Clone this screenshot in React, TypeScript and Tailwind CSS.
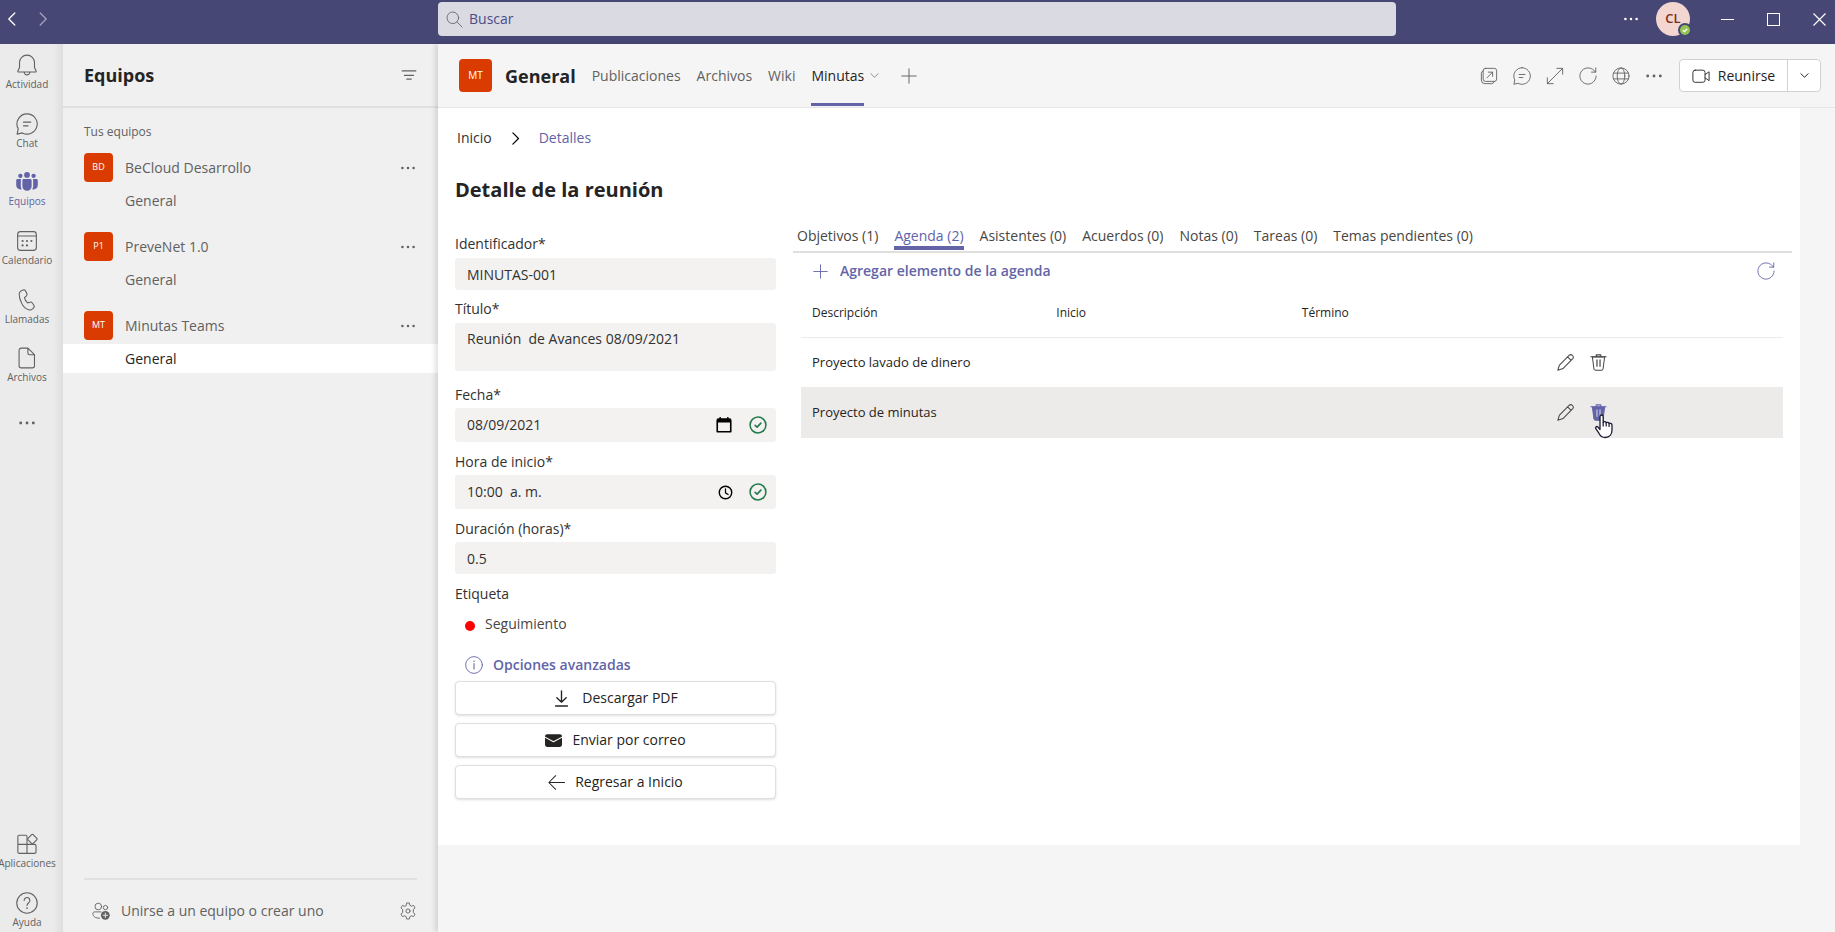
import { useState, type ReactNode } from 'react';

type IconProps = { size?: number; className?: string };

function Svg({ size = 20, className, children }: IconProps & { children: ReactNode }) {
  return (
    <svg
      width={size}
      height={size}
      viewBox="0 0 20 20"
      fill="none"
      stroke="currentColor"
      strokeWidth="1"
      strokeLinecap="round"
      strokeLinejoin="round"
      className={`shrink-0 ${className ?? ''}`}
      aria-hidden="true"
    >
      {children}
    </svg>
  );
}

const BellIcon = (p: IconProps) => (
  <Svg {...p}>
    <path d="M10 1a6.8 6.8 0 0 0-6.8 6.8v4.4l-1.5 3.2c-.2.5.1 1 .6 1h15.4c.5 0 .8-.5.6-1l-1.5-3.2V7.8A6.8 6.8 0 0 0 10 1zM7.4 16.6c.2 1.4 1.3 2.4 2.6 2.4s2.4-1 2.6-2.4" />
  </Svg>
);

const ChatIcon = (p: IconProps) => (
  <Svg {...p}>
    <path d="M10 .8a9.2 9.2 0 1 1-4.3 17.3L1 19.2l1-4.8A9.2 9.2 0 0 1 10 .8zM6.8 8.3h6.6M6.8 11.7h4.2" />
  </Svg>
);

const TeamsIcon = (p: IconProps) => (
  <Svg {...p}>
    <g fill="currentColor" stroke="none">
      <circle cx="10" cy="3.6" r="2.6" />
      <circle cx="4" cy="4.4" r="2" />
      <circle cx="16" cy="4.4" r="2" />
      <path d="M5.8 8.6c0-.8.6-1.3 1.3-1.3h5.8c.7 0 1.3.5 1.3 1.3v5.2a4.2 4.2 0 0 1-8.4 0z" />
      <path d="M.2 8.6c0-.8.5-1.3 1.2-1.3h3.3c-.2.3-.3.7-.3 1.2v5.3c0 1 .3 2 .8 2.8C2.7 17.3.2 15.7.2 13z" />
      <path d="M19.8 8.6c0-.8-.5-1.3-1.2-1.3h-3.3c.2.3.3.7.3 1.2v5.3c0 1-.3 2-.8 2.8 2.500.7 5-.9 5-3.600z" />
    </g>
  </Svg>
);

const CalendarIcon = (p: IconProps) => (
  <Svg {...p}>
    <rect x="1.5" y="1.5" width="17" height="17" rx="2.6" />
    <path d="M1.5 5.5h17" />
    <g fill="currentColor" stroke="none">
      <circle cx="6" cy="10" r="1" />
      <circle cx="10" cy="10" r="1" />
      <circle cx="14" cy="10" r="1" />
      <circle cx="6" cy="14" r="1" />
      <circle cx="10" cy="14" r="1" />
    </g>
  </Svg>
);

const PhoneIcon = (p: IconProps) => (
  <Svg {...p}>
    <path d="M5.3 1.3l1.2-.4c1-.3 2 .2 2.4 1.1l.9 2.1c.3.8.1 1.7-.5 2.3L7.700 7.900c.3 1.600 1.500 3.700 2.900 4.700l2-.6c.8-.3 1.700 0 2.200.7l1.300 1.900c.6.800.5 1.900-.2 2.600l-.9.9c-.9.9-2.200 1.200-3.400.8-2.900-.9-5.400-3.500-6.600-6.300C3.500 9.600 2.700 6.600 3 4.100c.2-1.300 1.100-2.400 2.300-2.800z" />
  </Svg>
);

const FileIcon = (p: IconProps) => (
  <Svg {...p}>
    <path d="M4.8 1h6l6 6v10a2 2 0 0 1-2 2h-10a2 2 0 0 1-2-2V3a2 2 0 0 1 2-2zM10.8 1v4.500A1.500 1.500 0 0 0 12.300 7h4.500" />
  </Svg>
);

const AppsIcon = (p: IconProps) => (
  <Svg {...p}>
    <path d="M10 10.300V3.200a1.200 1.200 0 0 0-1.200-1.200H2.900a1.200 1.200 0 0 0-1.200 1.200v14.100a1.200 1.200 0 0 0 1.200 1.200h14.100a1.200 1.200 0 0 0 1.200-1.200v-5.800a1.200 1.200 0 0 0-1.200-1.200zM1.700 10.300H10v8.200" />
    <rect x="11.6" y="2.2" width="6.6" height="6.6" rx="1" transform="rotate(45 14.9 5.5)" />
  </Svg>
);

const HelpIcon = (p: IconProps) => (
  <Svg {...p}>
    <circle cx="10" cy="10" r="9.3" />
    <path d="M7.4 7.7a2.6 2.6 0 1 1 4.2 2c-.9.7-1.6 1.2-1.6 2.5" />
    <circle cx="10" cy="14.6" r=".8" fill="currentColor" stroke="none" />
  </Svg>
);

const DotsIcon = (p: IconProps) => (
  <Svg {...p}>
    <g fill="currentColor" stroke="none">
      <circle cx="3" cy="10" r="1.6" />
      <circle cx="10" cy="10" r="1.6" />
      <circle cx="17" cy="10" r="1.6" />
    </g>
  </Svg>
);

const FilterIcon = (p: IconProps) => (
  <Svg {...p}>
    <path d="M2.5 5.500h15M5 10.500h10M7.500 14.500h5" strokeWidth="1.4" />
  </Svg>
);

const JoinTeamIcon = (p: IconProps) => (
  <Svg {...p}>
    <circle cx="7" cy="5" r="3.7" />
    <circle cx="15" cy="6.2" r="2.4" />
    <path d="M10 11H2.800C1.700 11 1 11.800 1 12.800c0 3.200 2.500 5.200 7.500 5.200" />
    <circle cx="14.8" cy="14.8" r="4.9" fill="currentColor" stroke="none" />
    <path d="M14.8 12.300v5M12.300 14.800h5" stroke="#f0f0f0" />
  </Svg>
);

const GearIcon = (p: IconProps) => (
  <Svg {...p}>
    <circle cx="10" cy="10" r="2.3" />
    <path d="M8 3.600L8.400 1.200a9 9 0 0 1 3.200 0l.4 2.400 1.900 1.100 2.300-.9a9 9 0 0 1 1.600 2.800L15.900 8.300v3.400l1.900 1.700a9 9 0 0 1-1.600 2.800l-2.300-.9L12 16.400l-.4 2.400a9 9 0 0 1-3.200 0L8 16.400l-1.900-1.100-2.300.9a9 9 0 0 1-1.600-2.800l1.900-1.700V8.300L2.200 6.600a9 9 0 0 1 1.600-2.800l2.300.9z" />
  </Svg>
);

const SearchIcon = (p: IconProps) => (
  <Svg {...p}>
    <circle cx="8" cy="8" r="6.8" />
    <path d="M13 13l6 6" />
  </Svg>
);

const ChevronLeft = (p: IconProps) => (
  <Svg {...p}><path d="M13.5 2.500L6 10l7.500 7.500" strokeWidth="1.600" /></Svg>
);
const ChevronRight = (p: IconProps) => (
  <Svg {...p}><path d="M6.5 2.500L14 10l-7.500 7.500" strokeWidth="1.600" /></Svg>
);
const ChevronDown = (p: IconProps) => (
  <Svg {...p}><path d="M2 6l8 8 8-8" strokeWidth="2.2" /></Svg>
);
const PlusIcon = (p: IconProps) => (
  <Svg {...p}><path d="M10 1v18M1 10h18" strokeWidth="1.2" /></Svg>
);

const PopOutIcon = (p: IconProps) => (
  <Svg {...p}>
    <rect x="3.5" y="1.5" width="15" height="14.5" rx="2.6" />
    <path d="M3.500 4.300A3 3 0 0 0 1.500 7v7.500a4 4 0 0 0 4 4H13a3 3 0 0 0 2.800-2.200M7.800 12l6.200-6.300M9.300 5.700H14v4.700" />
  </Svg>
);

const ExpandIcon = (p: IconProps) => (
  <Svg {...p}>
    <path d="M1.500 18.500l17-17M12 1.500h6.500V8M1.500 12v6.500H8" />
  </Svg>
);

const RefreshIcon = (p: IconProps) => (
  <Svg {...p}>
    <path d="M19 10a9 9 0 1 1-2.600-6.300L18.600 5.700M18.600 1v4.700h-4.700" />
  </Svg>
);

const GlobeIcon = (p: IconProps) => (
  <Svg {...p}>
    <circle cx="10" cy="10" r="9" />
    <ellipse cx="10" cy="10" rx="4.2" ry="9" />
    <path d="M1.800 6.800h16.400M1.800 13.200h16.400" />
  </Svg>
);

const VideoIcon = (p: IconProps) => (
  <Svg {...p}>
    <rect x="1" y="3.5" width="13.5" height="13.5" rx="2.5" />
    <path d="M14.500 8.500L19 5.300v9.900l-4.500-3.200" />
  </Svg>
);

const DateIcon = (p: IconProps) => (
  <Svg {...p}>
    <path d="M4 3.500h12a1.500 1.500 0 0 1 1.500 1.500v12.500h-15V5A1.500 1.500 0 0 1 4 3.500z" strokeWidth="1.8" />
    <path d="M2.500 3.500h15v3.800h-15zM5 1h1.500v3H5zM13.500 1H15v3h-1.500z" fill="currentColor" stroke="none" />
  </Svg>
);

const ClockIcon = (p: IconProps) => (
  <Svg {...p}>
    <circle cx="10" cy="10" r="8.3" strokeWidth="1.9" />
    <path d="M10 5v5.500l3.500 2.200" strokeWidth="1.6" />
  </Svg>
);

const ValidIcon = (p: IconProps) => (
  <Svg {...p}>
    <circle cx="10" cy="10" r="8.8" strokeWidth="1.7" />
    <path d="M6.800 10.400l2.200 2 4.200-4.500" strokeWidth="1.8" />
  </Svg>
);

const InfoIcon = (p: IconProps) => (
  <Svg {...p}>
    <circle cx="10" cy="10" r="9.3" />
    <path d="M10 8.500v6" strokeWidth="1.2" />
    <circle cx="10" cy="5.9" r=".8" fill="currentColor" stroke="none" />
  </Svg>
);

const DownloadIcon = (p: IconProps) => (
  <Svg {...p}>
    <path d="M10 1v13M4.500 9l5.500 5.300L15.500 9M3 18.800h14" strokeWidth="1.6" />
  </Svg>
);

const MailIcon = (p: IconProps) => (
  <Svg {...p}>
    <rect x="0" y="2.5" width="20" height="15" rx="2.5" fill="currentColor" stroke="none" />
    <path d="M0 6l10 5.500L20 6" stroke="#ffffff" strokeWidth="1.2" />
  </Svg>
);

const ArrowLeftIcon = (p: IconProps) => (
  <Svg {...p}>
    <path d="M19.500 10H1M9 2L1 10l8 8" strokeWidth="1.2" />
  </Svg>
);

const PencilIcon = (p: IconProps) => (
  <Svg {...p}>
    <path d="M14.200 1.700a2.900 2.900 0 0 1 4.100 4.100L7.300 16.800c-.3.300-.7.500-1.100.6L1 19l1.600-5.200c.1-.4.300-.8.6-1.100zM12.500 3.400l4.100 4.100" strokeWidth="1.2" />
  </Svg>
);

const TrashIcon = ({ filled, ...p }: IconProps & { filled?: boolean }) => (
  <Svg {...p}>
    <path d="M1 3.200h18M7.300 3V1h5.400v2" strokeWidth="1.3" />
    <path
      d="M2.800 3.500L4.600 17.400c.1 1 .8 1.600 1.700 1.600h7.400c.9 0 1.600-.6 1.700-1.600L17.200 3.500z"
      fill={filled ? 'currentColor' : 'none'}
      strokeWidth="1.2"
    />
    <path d="M8.200 7v7.500M11.800 7v7.500" stroke={filled ? '#c9c8e0' : 'currentColor'} strokeWidth="1.4" />
  </Svg>
);

const HandCursor = () => (
  <svg width="20" height="25" viewBox="0 0 20 25" className="pointer-events-none absolute left-1 top-[10px] z-10" aria-hidden="true">
    <path
      d="M6 15.500V2.800C6 1.700 6.700 1 7.600 1s1.600.7 1.600 1.800v5.500c.2-.9 2.800-.9 3 .5.600-.8 2.800-.5 2.900.8.700-.6 2.900-.3 2.900 1.500v5c0 4.300-2.500 7.400-6.800 7.400-3.200 0-4.900-1.500-6.300-4.300l-3.100-4.500c-.8-1.300.6-2.700 2-1.900z"
      fill="#ffffff"
      stroke="#1b1b33"
      strokeWidth="1.3"
      strokeLinejoin="round"
    />
    <path d="M9.200 8v4.500M12.200 8.800v3.700M15.100 9.600v3.400" stroke="#1b1b33" strokeWidth="1.2" />
  </svg>
);

const RAIL_ITEMS = [
  { label: 'Actividad',  icon: BellIcon },
  { label: 'Chat',       icon: ChatIcon },
  { label: 'Equipos',    icon: TeamsIcon },
  { label: 'Calendario', icon: CalendarIcon },
  { label: 'Llamadas',   icon: PhoneIcon },
  { label: 'Archivos',   icon: FileIcon },
];

const RAIL_FOOTER = [
  { label: 'Aplicaciones', icon: AppsIcon },
  { label: 'Ayuda',        icon: HelpIcon },
];

const TEAMS = [
  { initials: 'BD', name: 'BeCloud Desarrollo' },
  { initials: 'P1', name: 'PreveNet 1.0' },
  { initials: 'MT', name: 'Minutas Teams' },
];

const DETAIL_TABS = [
  { label: 'Objetivos',        count: 1 },
  { label: 'Agenda',           count: 2 },
  { label: 'Asistentes',       count: 0 },
  { label: 'Acuerdos',         count: 0 },
  { label: 'Notas',            count: 0 },
  { label: 'Tareas',           count: 0 },
  { label: 'Temas pendientes', count: 0 },
];

const AGENDA = [
  { id: 1, description: 'Proyecto lavado de dinero', start: '', end: '' },
  { id: 2, description: 'Proyecto de minutas',       start: '', end: '' },
];

function RailButton({ label, icon: Icon, active }: { label: string; icon: (p: IconProps) => ReactNode; active?: boolean }) {
  return (
    <button
      type="button"
      className={`flex w-[54px] flex-col items-center justify-center text-[10px] leading-4 ${active ? 'text-[#6264a7]' : 'text-[#616161]'}`}
    >
      <Icon size={22} />
      {label}
    </button>
  );
}

function TitleBar() {
  return (
    <header className="flex h-11 shrink-0 items-start bg-[#464775] text-white">
      <div className="flex h-[38px] w-[438px] shrink-0 items-center gap-[15px] pl-1">
        <button type="button" aria-label="Atrás"><ChevronLeft size={16} /></button>
        <button type="button" aria-label="Adelante" className="text-[#a3a3ba]"><ChevronRight size={16} /></button>
      </div>
      <label className="mt-0.5 flex h-[34px] flex-1 items-center gap-1.5 rounded bg-[#dadae3] pl-2">
        <SearchIcon size={17} className="text-[#616161]" />
        <input
          type="search"
          aria-label="Buscar"
          placeholder="Buscar"
          className="w-full bg-transparent text-sm text-[#464775] outline-none placeholder:text-[#4b4c86]"
        />
      </label>
      <div className="flex h-[38px] w-[439px] shrink-0 items-center justify-end pr-2">
        <button type="button" aria-label="Más opciones" className="mr-[17px]"><DotsIcon size={16} /></button>
        <button type="button" aria-label="Cuenta" className="relative mr-[30px] flex size-[34px] items-center justify-center rounded-full bg-[#f3d6cf] text-[13px] font-semibold text-[#7a2e1d]">
          CL
          <svg width="14" height="14" viewBox="0 0 14 14" className="absolute -bottom-px -right-0.5" aria-hidden="true">
            <circle cx="7" cy="7" r="7" fill="#464775" />
            <circle cx="7" cy="7" r="5" fill="#92c353" />
            <path d="M4.800 7.100l1.600 1.500 2.800-2.900" fill="none" stroke="#ffffff" strokeWidth="1.3" />
          </svg>
        </button>
        <button type="button" aria-label="Minimizar" className="mr-[31px]">
          <svg width="15" height="15" viewBox="0 0 15 15" fill="none" stroke="currentColor"><path d="M1 7.500h13" /></svg>
        </button>
        <button type="button" aria-label="Maximizar" className="mr-[31px]">
          <svg width="15" height="15" viewBox="0 0 15 15" fill="none" stroke="currentColor"><rect x="1.5" y="1.5" width="12" height="12" /></svg>
        </button>
        <button type="button" aria-label="Cerrar">
          <svg width="15" height="15" viewBox="0 0 15 15" fill="none" stroke="currentColor" strokeWidth="1.2"><path d="M1.500 1.500l12 12M13.500 1.500l-12 12" /></svg>
        </button>
      </div>
    </header>
  );
}

function TeamsPanel() {
  return (
    <aside className="flex w-[375px] shrink-0 flex-col bg-[#f0f0f0] text-[#616161]">
      <div className="flex h-16 shrink-0 items-center justify-between border-b-2 border-[#e0e0e0] pl-[21px] pr-5">
        <h2 className="text-lg font-bold text-[#242424]">Equipos</h2>
        <button type="button" aria-label="Filtrar"><FilterIcon size={18} /></button>
      </div>
      <p className="pl-[21px] pt-4 text-xs leading-4">Tus equipos</p>
      <ul className="mt-[13px] flex flex-col gap-[17px]">
        {TEAMS.map((team) => {
          const selected = team.initials === 'MT';
          return (
            <li key={team.initials}>
              <div className="mb-1 flex h-[29px] items-center pl-[21px] pr-[22px] text-sm">
                <span className="mr-3 flex size-[29px] items-center justify-center rounded bg-[#da3b01] text-[9px] text-white">
                  {team.initials}
                </span>
                <span className="flex-1">{team.name}</span>
                <button type="button" aria-label={`Más opciones de ${team.name}`}><DotsIcon size={16} /></button>
              </div>
              <a
                href="#general"
                className={`flex h-[29px] items-center pl-[62px] text-sm ${selected ? 'bg-white text-[#242424]' : ''}`}
              >
                General
              </a>
            </li>
          );
        })}
      </ul>
      <div className="mx-[21px] mt-auto flex h-[54px] shrink-0 items-center justify-between border-t-2 border-[#e0e0e0] pl-2 pt-2.5">
        <button type="button" className="flex items-center gap-[11px] text-sm">
          <JoinTeamIcon size={18} />
          Unirse a un equipo o crear uno
        </button>
        <button type="button" aria-label="Configuración"><GearIcon size={18} /></button>
      </div>
    </aside>
  );
}

function ChannelHeader() {
  const tab = 'flex h-full items-center';
  return (
    <div className="flex h-16 shrink-0 items-center border-b border-[#e5e5e5] bg-[#f5f5f5] pl-[21px] pr-3.5 text-[#616161]">
      <span className="mr-[13px] flex size-[33px] items-center justify-center rounded bg-[#da3b01] text-[10px] text-white">MT</span>
      <h1 className="mr-4 text-lg font-bold leading-6 text-[#242424]">General</h1>
      <nav className="flex h-full items-center gap-4 text-sm">
        <a href="#publicaciones" className={tab}>Publicaciones</a>
        <a href="#archivos" className={tab}>Archivos</a>
        <a href="#wiki" className={tab}>Wiki</a>
        <a href="#minutas" aria-current="page" className={`${tab} relative gap-1.5 font-medium text-[#242424]`}>
          Minutas
          <ChevronDown size={9} className="text-[#8a8a8a]" />
          <span className="absolute bottom-px left-0 right-[15px] h-[3px] bg-[#6264a7]" />
        </a>
        <button type="button" aria-label="Agregar pestaña" className="ml-1.5"><PlusIcon size={16} /></button>
      </nav>
      <div className="ml-auto flex items-center gap-[15px]">
        <button type="button" aria-label="Abrir en ventana"><PopOutIcon size={18} /></button>
        <button type="button" aria-label="Conversación"><ChatIcon size={18} /></button>
        <button type="button" aria-label="Expandir"><ExpandIcon size={18} /></button>
        <button type="button" aria-label="Recargar"><RefreshIcon size={18} /></button>
        <button type="button" aria-label="Ir al sitio web"><GlobeIcon size={18} /></button>
        <button type="button" aria-label="Más"><DotsIcon size={18} /></button>
      </div>
      <div className="ml-4 flex h-[33px] rounded border border-[#d1d1d1] bg-white text-[#242424]">
        <button type="button" className="flex w-[108px] items-center justify-center gap-2 border-r border-[#d1d1d1] text-sm font-medium">
          <VideoIcon size={18} />
          Reunirse
        </button>
        <button type="button" aria-label="Opciones de reunión" className="flex w-8 items-center justify-center">
          <ChevronDown size={9} />
        </button>
      </div>
    </div>
  );
}

const FIELD = 'block w-full rounded-[3px] bg-[#f3f2f1] px-3 text-sm text-[#323130] outline-none';
const LABEL = 'block text-sm leading-5';

function MeetingForm() {
  return (
    <form className="w-[321px] shrink-0 text-[#323130]" onSubmit={(e) => e.preventDefault()}>
      <label htmlFor="ident" className={LABEL}>Identificador*</label>
      <input id="ident" type="text" defaultValue="MINUTAS-001" className={`${FIELD} mt-1 h-8`} />

      <label htmlFor="titulo" className={`${LABEL} mt-[9px]`}>Título*</label>
      <textarea id="titulo" defaultValue="Reunión  de Avances 08/09/2021" className={`${FIELD} mt-1 h-12 resize-none py-1.5 leading-5`} />

      <label htmlFor="fecha" className={`${LABEL} mt-[14px]`}>Fecha*</label>
      <div className="mt-[3px] flex h-[34px] items-center rounded-[3px] bg-[#f3f2f1] pr-[9px]">
        <input id="fecha" type="text" defaultValue="08/09/2021" className={FIELD} />
        <button type="button" aria-label="Elegir fecha" className="mr-4 text-black"><DateIcon size={18} /></button>
        <ValidIcon size={18} className="text-[#237b4b]" />
      </div>

      <label htmlFor="hora" className={`${LABEL} mt-[10px]`}>Hora de inicio*</label>
      <div className="mt-[3px] flex h-[34px] items-center rounded-[3px] bg-[#f3f2f1] pr-[9px]">
        <input id="hora" type="text" defaultValue="10:00  a. m." className={FIELD} />
        <button type="button" aria-label="Elegir hora" className="mr-4 text-black"><ClockIcon size={15} /></button>
        <ValidIcon size={18} className="text-[#237b4b]" />
      </div>

      <label htmlFor="duracion" className={`${LABEL} mt-[10px]`}>Duración (horas)*</label>
      <input id="duracion" type="text" defaultValue="0.5" className={`${FIELD} mt-[3px] h-8`} />

      <p className={`${LABEL} mt-[10px]`}>Etiqueta</p>
      <div className="mt-[10px] flex items-center gap-2.5 pl-2.5 text-sm leading-5">
        <span className="mt-1 size-2.5 rounded-full bg-[#ff0000]" />
        <span className="font-medium text-[#484644]">Seguimiento</span>
      </div>

      <button type="button" className="mt-[21px] flex items-center gap-2.5 pl-2.5 text-sm font-semibold leading-5 text-[#6264a7]">
        <InfoIcon size={18} />
        Opciones avanzadas
      </button>

      <div className="mt-1.5 flex flex-col gap-2">
        <FormButton><DownloadIcon size={17} className="mr-3" />Descargar PDF</FormButton>
        <FormButton><MailIcon size={17} className="mr-2.5" />Enviar por correo</FormButton>
        <FormButton><ArrowLeftIcon size={17} className="mr-2.5" />Regresar a Inicio</FormButton>
      </div>
    </form>
  );
}

function FormButton({ children }: { children: ReactNode }) {
  return (
    <button
      type="button"
      className="flex h-[34px] w-full items-center justify-center rounded-sm border border-[#e1dfdd] bg-white text-sm font-medium text-[#252423] shadow"
    >
      {children}
    </button>
  );
}

function AgendaPanel() {
  const [activeTab, setActiveTab] = useState('Agenda');

  return (
    <section className="min-w-0 flex-1 text-[#484644]">
      <div role="tablist" className="flex gap-4 border-b-2 border-[#e1dfdd] pl-1 text-sm leading-5">
        {DETAIL_TABS.map(({ label, count }) => (
          <button
            key={label}
            type="button"
            role="tab"
            aria-selected={activeTab === label}
            onClick={() => setActiveTab(label)}
            className={`mb-px border-b-4 ${activeTab === label ? 'border-[#6264a7] text-[#6264a7]' : 'border-transparent'}`}
          >
            {label} ({count})
          </button>
        ))}
      </div>

      <div className="flex h-9 items-center justify-between pl-5 pr-[17px] text-[#6264a7]">
        <button type="button" className="flex items-center gap-3 text-sm font-semibold">
          <PlusIcon size={15} />
          Agregar elemento de la agenda
        </button>
        <button type="button" aria-label="Actualizar"><RefreshIcon size={18} /></button>
      </div>

      <div className="pl-2 pr-[9px]">
        <table className="w-full table-fixed border-collapse text-left text-[13px] text-[#252423]">
          <thead>
            <tr className="h-12 border-b border-[#edebe9] text-xs">
              <th className="w-[26%] pl-[11px] font-normal">Descripción</th>
              <th className="w-[25%] font-normal">Inicio</th>
              <th className="w-[26%] font-normal">Término</th>
              <th aria-label="Acciones" />
            </tr>
          </thead>
          <tbody>
            {AGENDA.map((item) => {
              const hovered = item.id === 2;
              return (
                <tr key={item.id} className={hovered ? 'h-[51px] bg-[#edebe9]' : 'h-[50px]'}>
                  <td className="pl-[11px]">{item.description}</td>
                  <td>{item.start}</td>
                  <td>{item.end}</td>
                  <td>
                    <div className="flex items-center gap-4 text-[#484644]">
                      <button type="button" aria-label="Editar"><PencilIcon size={17} /></button>
                      <button type="button" aria-label="Eliminar" className="relative">
                        <TrashIcon size={17} filled={hovered} className={hovered ? 'text-[#6264a7]' : ''} />
                        {hovered && <HandCursor />}
                      </button>
                    </div>
                  </td>
                </tr>
              );
            })}
          </tbody>
        </table>
      </div>
    </section>
  );
}

export default function App() {
  return (
    <div className="flex min-h-screen flex-col bg-[#f5f5f5] font-['Segoe_UI','Open_Sans',sans-serif]">
      <TitleBar />
      <div className="flex flex-1">
        <div className="flex w-[63px] shrink-0 flex-col justify-between bg-linear-to-r from-[#ebebeb] from-85% to-[#dedede] pb-0.5">
          <nav className="grid h-[410px] grid-cols-1 grid-rows-7">
            {RAIL_ITEMS.map((item) => (
              <RailButton key={item.label} {...item} active={item.label === 'Equipos'} />
            ))}
            <button type="button" aria-label="Más aplicaciones" className="flex w-[54px] items-center justify-center pb-1 text-[#616161]">
              <DotsIcon size={18} />
            </button>
          </nav>
          <div className="flex flex-col gap-[21px]">
            {RAIL_FOOTER.map((item) => <RailButton key={item.label} {...item} />)}
          </div>
        </div>

        <TeamsPanel />

        <div className="z-10 flex min-w-0 flex-1 flex-col shadow-[-3px_0_5px_rgba(0,0,0,0.12)]">
          <ChannelHeader />
          <main className="mr-[35px] bg-white pb-[46px] pl-[17px] pr-2">
            <nav aria-label="Ruta" className="flex items-center pl-0.5 pt-5 text-sm leading-5">
              <a href="#inicio" className="text-[#323130]">Inicio</a>
              <ChevronRight size={15} className="mx-4 text-black" />
              <a href="#detalles" aria-current="page" className="font-medium text-[#6264a7]">Detalles</a>
            </nav>
            <h2 className="mt-7 text-xl font-bold leading-7 text-[#252423]">Detalle de la reunión</h2>
            <div className="mt-[22px] flex items-start gap-[17px]">
              <div className="pt-2"><MeetingForm /></div>
              <AgendaPanel />
            </div>
          </main>
        </div>
      </div>
    </div>
  );
}
